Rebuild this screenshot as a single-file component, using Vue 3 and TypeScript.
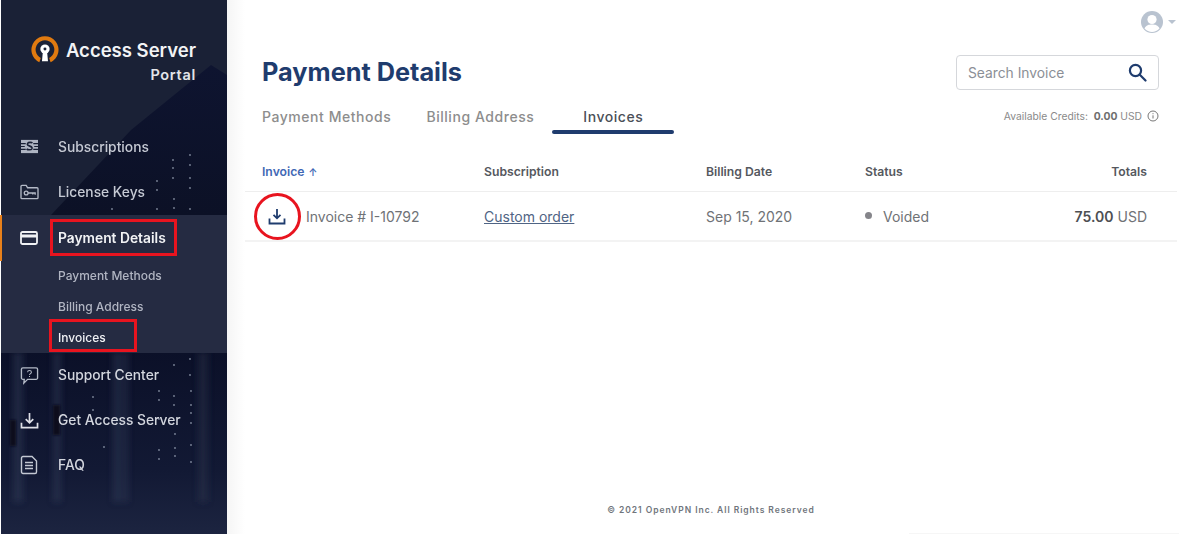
<script setup lang="ts">
interface NavItem { label: string; icon: string; active?: boolean }
const topNav: NavItem[] = [
  { label: 'Subscriptions', icon: 'subs' },
  { label: 'License Keys', icon: 'key' },
]
const bottomNav: NavItem[] = [
  { label: 'Support Center', icon: 'help' },
  { label: 'Get Access Server', icon: 'download' },
  { label: 'FAQ', icon: 'faq' },
]
const dots: [number, number][] = [
  [172,160],[189,155],[172,168],[189,165],[156,181],[172,178],[189,178],[173,199],[189,188],[156,190],[173,208],[156,209],[111,209],[189,209],
  [189,359],[173,365],[189,375],[158,391],[173,396],[190,391],[158,400],[173,405],[190,405],[190,413],[158,419],[174,434],[190,423],[158,450],[174,448],[190,445],[158,459],[174,456],[190,462],[103,447],[92,397],[92,410],[92,424],
]
const racks: [number, number, number][] = [[12,352,10],[52,352,8],[112,352,8],[122,352,5]]
</script>

<template>
  <div class="page">
    <aside class="sidebar">
      <svg class="backdrop" width="226" height="534" viewBox="0 0 226 534" aria-hidden="true">
        <defs>
          <linearGradient id="floor" x1="0" y1="0" x2="0" y2="1">
            <stop offset="0" stop-color="#0b1028" />
            <stop offset="0.65" stop-color="#121934" />
            <stop offset="1" stop-color="#1c2440" />
          </linearGradient>
          <linearGradient id="tower" x1="0" y1="0" x2="0" y2="1">
            <stop offset="0" stop-color="#0e1430" />
            <stop offset="1" stop-color="#0c1126" />
          </linearGradient>
          <filter id="soft" x="-50%" y="-5%" width="200%" height="110%">
            <feGaussianBlur stdDeviation="3" />
          </filter>
          <filter id="softer" x="-50%" y="-20%" width="200%" height="140%">
            <feGaussianBlur stdDeviation="1" />
          </filter>
        </defs>
        <rect width="226" height="534" fill="#1a2136" />
        <polygon points="50,215 130,130 210,65 226,75 226,215" fill="url(#tower)" />
        <rect y="350" width="226" height="184" fill="url(#floor)" />
        <g filter="url(#soft)">
          <rect v-for="(r, i) in racks" :key="i" :x="r[0]" :y="r[1]" :width="r[2]" height="150" fill="#3a4362" opacity="0.4" />
          <rect x="197" y="352" width="10" height="150" fill="#303852" opacity="0.35" />
        </g>
        <g filter="url(#softer)">
          <rect x="9" y="420" width="6" height="26" fill="#0a0e1e" />
          <rect x="52" y="405" width="7" height="30" fill="#0a0e1e" />
        </g>
        <circle v-for="(d, i) in dots" :key="i" :cx="d[0]" :cy="d[1]" r="0.9" fill="#aeb6c9" opacity="0.7" />
      </svg>

      <div class="brand">
        <div class="brand-row">
          <svg class="logo" width="32" height="32" viewBox="0 0 32 32" aria-hidden="true">
            <path d="M10 29 A14.500 14.500 0 1 1 22 29 L20.500 24.500 A10 10 0 1 0 11.500 24.500 Z" fill="#e07a10" />
            <circle cx="16" cy="15" r="5" fill="#fff" />
            <path d="M13.800 17 h4.400 l1 11 h-6.400 Z" fill="#fff" />
            <circle cx="16" cy="15" r="1.600" fill="#1a2136" />
          </svg>
          <span class="brand-name">Access Server</span>
        </div>
        <div class="brand-sub">Portal</div>
      </div>

      <nav class="nav">
        <a v-for="item in topNav" :key="item.label" class="nav-item">
          <span class="nav-icon">
            <svg v-if="item.icon === 'subs'" width="19" height="17" viewBox="0 0 20 18" fill="none" aria-hidden="true">
              <path d="M1 2h18v14H1z" fill="#aeb4c2" />
              <path d="M1 6h5M1 9h4M1 12h5M14 6h5M15 9h4M14 12h5" stroke="#1a2136" stroke-width="1.200" />
              <path d="M13 5.500c-.6-1-4-1.300-5 .2-1 1.700 .8 2.400 2.300 2.900 1.600.5 3 1.300 2.200 2.900-.8 1.400-4.500 1.200-5.500 0" stroke="#1a2136" stroke-width="1.700" />
            </svg>
            <svg v-else width="19" height="17" viewBox="0 0 20 18" fill="none" stroke="#b4bac7" stroke-width="1.400" aria-hidden="true">
              <path d="M1 14.500V2.500A1 1 0 0 1 2 1.500h4.500l1.500 2.500h10a1 1 0 0 1 1 1v9.500a1 1 0 0 1-1 1H2a1 1 0 0 1-1-1Z" />
              <circle cx="6.500" cy="9.500" r="2" />
              <path d="M8.500 9.500H16v2M13.500 9.500v1.500" />
            </svg>
          </span>
          <span>{{ item.label }}</span>
        </a>

        <section class="active-group">
          <a class="nav-item nav-item-active">
            <span class="nav-icon">
              <svg width="18" height="14" viewBox="0 0 18 14" fill="none" aria-hidden="true">
                <rect x="1" y="1" width="16" height="12" rx="1.500" stroke="#f0f1f4" stroke-width="1.800" />
                <rect x="1" y="3.500" width="16" height="3" fill="#f0f1f4" />
              </svg>
            </span>
            <span class="marked marked-main">Payment Details</span>
          </a>
          <a class="sub-item">Payment Methods</a>
          <a class="sub-item">Billing Address</a>
          <a class="sub-item sub-item-current"><span class="marked marked-sub">Invoices</span></a>
        </section>

        <a v-for="item in bottomNav" :key="item.label" class="nav-item nav-item-low">
          <span class="nav-icon">
            <svg v-if="item.icon === 'help'" width="19" height="19" viewBox="0 0 20 20" fill="none" stroke="#b4bac7" stroke-width="1.400" aria-hidden="true">
              <path d="M3 2h14a1.500 1.500 0 0 1 1.500 1.500v9A1.500 1.500 0 0 1 17 14H8l-4 4 .5-4H3a1.500 1.500 0 0 1-1.500-1.500v-9A1.500 1.500 0 0 1 3 2Z" />
              <path d="M8 6.500c0-2.300 4-2.300 4 0 0 1.500-2 1.500-2 3M10 10.500v1.200" stroke-width="1.100" />
            </svg>
            <svg v-else-if="item.icon === 'download'" width="19" height="17" viewBox="0 0 20 18" fill="none" stroke="#dfe1e7" stroke-width="1.800" aria-hidden="true">
              <path d="M10 1v10M6 7.500l4 4 4-4" />
              <path d="M1.500 11.500v5h17v-5" />
            </svg>
            <svg v-else width="18" height="20" viewBox="0 0 18 20" fill="none" stroke="#c3c8d3" stroke-width="1.400" aria-hidden="true">
              <path d="M3 1.500h9l4.500 4.500v11a1.500 1.500 0 0 1-1.500 1.500H3A1.500 1.500 0 0 1 1.500 17V3A1.500 1.500 0 0 1 3 1.500Z" />
              <path d="M5 7.500h8M5 10.500h8M5 13.500h8" stroke-width="1.600" />
            </svg>
          </span>
          <span>{{ item.label }}</span>
        </a>
      </nav>
    </aside>

    <main class="main">
      <div class="account">
        <svg width="24" height="24" viewBox="0 0 24 24" aria-hidden="true">
          <circle cx="12" cy="12" r="11" fill="#b9c3d0" />
          <circle cx="12" cy="9.500" r="4.600" fill="#fff" />
          <path d="M4.500 18.500c1.500-3.500 4.500-4 7.500-4s6 .5 7.500 4c-2 2.300-4.700 3.500-7.500 3.500s-5.500-1.200-7.500-3.500Z" fill="#fff" />
        </svg>
        <span class="caret"></span>
      </div>

      <header class="heading">
        <h1>Payment Details</h1>
        <label class="search">
          <input type="text" placeholder="Search Invoice" />
          <svg width="19" height="19" viewBox="0 0 19 19" fill="none" stroke="#1f3c6e" stroke-width="2.200" aria-hidden="true">
            <circle cx="7.500" cy="7.500" r="5.600" />
            <path d="M11.800 11.800 17.500 17.500" stroke-linecap="round" />
          </svg>
        </label>
      </header>

      <div class="tabs-row">
        <div class="tabs">
          <a class="tab">Payment Methods</a>
          <a class="tab">Billing Address</a>
          <a class="tab tab-active">Invoices</a>
        </div>
        <div class="credits">
          <span>Available Credits:&nbsp; <b>0.00</b> USD</span>
          <svg width="12" height="12" viewBox="0 0 12 12" fill="none" stroke="#777" stroke-width="1" aria-hidden="true">
            <circle cx="6" cy="6" r="5" />
            <path d="M6 5.300v3.200M6 3.200v1" />
          </svg>
        </div>
      </div>

      <div class="table">
        <div class="row row-head">
          <span class="sorted">Invoice <i>↑</i></span>
          <span>Subscription</span>
          <span>Billing Date</span>
          <span>Status</span>
          <span class="right">Totals</span>
        </div>
        <div class="row row-body">
          <span class="invoice-cell">
            <span class="download-mark">
              <svg width="18" height="17" viewBox="0 0 18 17" fill="none" stroke="#1f3c6e" stroke-width="1.800" aria-hidden="true">
                <path d="M9 1v9M5.500 6.800 9 10.300l3.500-3.500" />
                <path d="M1.500 10.500v5h15v-5" />
              </svg>
            </span>
            Invoice # I-10792
          </span>
          <span><a class="order">Custom order</a></span>
          <span>Sep 15, 2020</span>
          <span class="status"><i class="dot"></i>Voided</span>
          <span class="right"><b>75.00</b> USD</span>
        </div>
      </div>

      <footer class="footer">© 2021 OpenVPN Inc. All Rights Reserved</footer>
    </main>
  </div>
</template>

<style>
html, body { background: #fff; }
</style>

<style scoped>
.page {
  display: flex;
  align-items: flex-start;
  width: 1179px;
  height: 544px;
  overflow: hidden;
  font-family: Inter, "Noto Sans", sans-serif;
  background: #fff;
}
.sidebar {
  position: relative;
  flex: none;
  width: 226px;
  height: 534px;
  margin-left: 1px;
  color: #dfe1e7;
}
.backdrop { position: absolute; inset: 0; }
.brand {
  position: relative;
  padding: 34px 31px 0 29px;
  height: 124px;
  box-sizing: border-box;
}
.brand-row { display: flex; align-items: center; gap: 6px; }
.brand-name { font-size: 18.5px; font-weight: 600; color: #f2f3f5; white-space: nowrap; }
.brand-sub { text-align: right; font-size: 14.5px; font-weight: 600; letter-spacing: 0.7px; color: #e3e5ea; }
.nav { position: relative; display: flex; flex-direction: column; }
.nav-item {
  display: flex;
  align-items: center;
  height: 45.5px;
  font-size: 13.8px;
  font-weight: 500;
  color: #c6cad4;
}
.nav-item-low { color: #d3d6de; height: 45px; }
.nav-icon {
  flex: none;
  width: 57px;
  padding-left: 19px;
  box-sizing: border-box;
  display: flex;
  align-items: center;
}
.active-group {
  position: relative;
  background: #252b42;
  height: 137.5px;
}
.active-group::before {
  content: "";
  position: absolute;
  left: -1px;
  top: 0;
  width: 2px;
  height: 46px;
  background: #e8801a;
}
.nav-item-active { color: #f2f3f5; font-weight: 600; height: 45px; }
.sub-item {
  display: block;
  height: 31px;
  line-height: 31px;
  padding-left: 57px;
  font-size: 12px;
  font-weight: 500;
  color: #b1b5c2;
}
.sub-item-current { color: #f0f1f4; }
.marked { position: relative; display: inline-block; }
.marked::after {
  content: "";
  position: absolute;
  border: 3px solid #e8141f;
  box-sizing: border-box;
}
.marked-main::after { left: -8px; right: -11px; top: -11px; bottom: -10px; }
.marked-sub::after { left: -9px; right: -31px; top: -3px; bottom: 1px; }

.main {
  position: relative;
  flex: 1;
  min-width: 0;
  height: 534px;
  padding-left: 18px;
  box-sizing: border-box;
  background: linear-gradient(90deg, #f5f5f5 0, #fff 18px);
  display: flex;
  flex-direction: column;
}
.account {
  display: flex;
  align-items: center;
  justify-content: flex-end;
  gap: 4px;
  height: 44px;
  padding-right: 3px;
}
.caret {
  width: 0;
  height: 0;
  border-left: 4px solid transparent;
  border-right: 4px solid transparent;
  border-top: 4px solid #b9c3d0;
}
.heading {
  display: flex;
  align-items: center;
  justify-content: space-between;
  padding: 11px 20px 0 17px;
  height: 46px;
  box-sizing: border-box;
}
h1 { margin: -2px 0 0; font-size: 25.3px; font-weight: 700; color: #1f3c6e; }
.search {
  display: flex;
  align-items: center;
  width: 203px;
  height: 35px;
  box-sizing: border-box;
  border: 1px solid #d5d7db;
  border-radius: 4px;
  padding: 0 11px;
  background: #fff;
}
.search input {
  flex: 1;
  min-width: 0;
  border: 0;
  outline: 0;
  padding: 0;
  font: 400 13.8px Inter, "Noto Sans", sans-serif;
  background: transparent;
}
.search input::placeholder { color: #8b8f96; opacity: 1; }
.tabs-row {
  display: flex;
  align-items: flex-start;
  justify-content: space-between;
  padding: 11px 20px 0 17px;
  height: 60px;
  box-sizing: border-box;
}
.tabs { display: flex; }
.tab {
  height: 33px;
  line-height: 32px;
  margin-right: 35px;
  font-size: 14px;
  font-weight: 500;
  letter-spacing: 0.55px;
  color: #8d8d8d;
  white-space: nowrap;
}
.tab-active {
  width: 122px;
  margin-left: -17px;
  margin-right: 0;
  text-align: center;
  color: #4a4f57;
  position: relative;
}
.tab-active::after {
  content: "";
  position: absolute;
  left: 0;
  right: 0;
  top: 29px;
  height: 4px;
  border-radius: 2px;
  background: #1f3c6e;
}
.credits {
  display: flex;
  align-items: center;
  gap: 5px;
  margin-top: 9px;
  font-size: 10.3px;
  color: #8a8a8a;
  white-space: pre;
}
.credits b { color: #6e6e6e; font-weight: 700; }
.table { margin-right: 2px; }
.row {
  display: grid;
  grid-template-columns: 222px 222px 159px 1fr auto;
  align-items: center;
  padding: 0 30px 0 17px;
  border-bottom: 1px solid #eeeeee;
  box-sizing: border-box;
}
.row-head {
  height: 42px;
  padding-top: 2px;
  font-size: 12.2px;
  font-weight: 600;
  color: #55585e;
}
.row-body {
  height: 50px;
  border-bottom: 2px solid #f3f3f3;
  font-size: 14px;
  color: #6f7276;
}
.sorted { color: #3f68b5; }
.sorted i { font-style: normal; font-size: 10px; margin-left: 1px; }
.invoice-cell { display: flex; align-items: center; gap: 20px; margin-left: 6px; position: relative; }
.download-mark { position: relative; display: flex; width: 18px; }
.download-mark::after {
  content: "";
  position: absolute;
  left: -14.5px;
  top: -15px;
  width: 47px;
  height: 47px;
  box-sizing: border-box;
  border: 3px solid #e8141f;
  border-radius: 50%;
}
.order { color: #4f6484; text-decoration: underline; }
.status { display: flex; align-items: center; }
.dot {
  width: 7px;
  height: 7px;
  border-radius: 50%;
  background: #85858a;
  margin-right: 11px;
  transform: translateY(-1px);
}
.right { text-align: right; }
.row-body b { color: #4d4f53; font-weight: 600; }
.footer {
  margin-top: auto;
  padding: 0 2px 19px 0;
  text-align: center;
  font-size: 8.5px;
  font-weight: 600;
  letter-spacing: 0.95px;
  color: #70757c;
}
.footer::after {
  content: "";
  position: absolute;
  right: 0;
  bottom: 0;
  width: 270px;
  height: 1px;
  background: #f6f6f6;
}
</style>
